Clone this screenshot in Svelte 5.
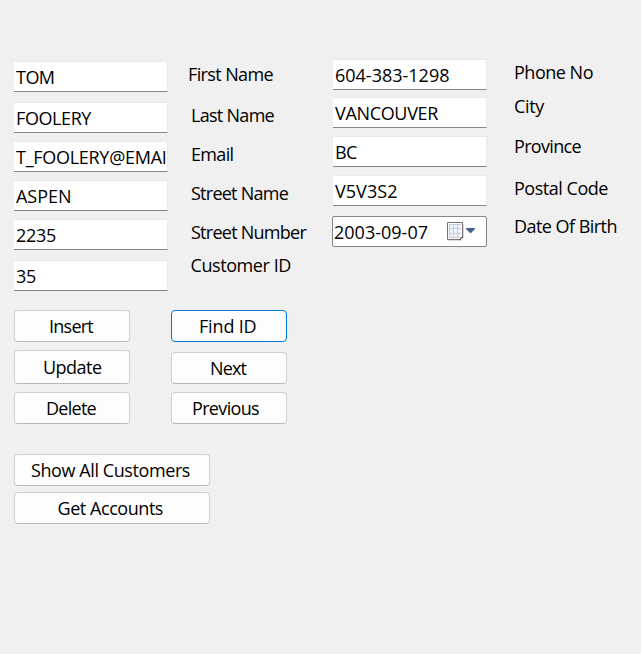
<script>
  // t: text, gap: space above, x: left inset, w: advance width of the text
  const names = [
    { t: 'TOM', gap: 0, x: 1, w: 38.5 },
    { t: 'FOOLERY', gap: 10, x: 1, w: 75 },
    { t: 'T_FOOLERY@EMAI', gap: 8, x: 1, w: 150.5 },
    { t: 'ASPEN', gap: 8, x: 1, w: 55.5 },
    { t: '2235', gap: 8, x: 1, w: 40 },
    { t: '35', gap: 10, x: 1, w: 20 }
  ];
  const nameLabels = [
    { t: 'First Name', gap: 0, x: 1, w: 85 },
    { t: 'Last Name', gap: 17, x: 4, w: 83 },
    { t: 'Email', gap: 15, x: 4, w: 42.5 },
    { t: 'Street Name', gap: 15, x: 4, w: 97 },
    { t: 'Street Number', gap: 15, x: 4, w: 115 },
    { t: 'Customer ID', gap: 9, x: 3.5, w: 100.5 }
  ];
  const details = [
    { t: '604-383-1298', gap: 0, x: 1, w: 114.5 },
    { t: 'VANCOUVER', gap: 7, x: 1, w: 103 },
    { t: 'BC', gap: 8, x: 1, w: 21.5 },
    { t: 'V5V3S2', gap: 8, x: 1, w: 62.5 }
  ];
  const detailLabels = [
    { t: 'Phone No', gap: 0, x: 2, w: 79 },
    { t: 'City', gap: 10, x: 2, w: 30 },
    { t: 'Province', gap: 16, x: 2, w: 67 },
    { t: 'Postal Code', gap: 18, x: 2, w: 94 },
    { t: 'Date Of Birth', gap: 14, x: 2, w: 103 }
  ];
  const edits = [
    { t: 'Insert', gap: 0, h: 32, x: 34, w: 44 },
    { t: 'Update', gap: 8, h: 34, x: 28, w: 58.5 },
    { t: 'Delete', gap: 8, h: 32, x: 31, w: 50 }
  ];
  const moves = [
    { t: 'Find ID', gap: 0, h: 32, x: 27, w: 57.5, focus: true },
    { t: 'Next', gap: 10, h: 32, x: 38, w: 36 },
    { t: 'Previous', gap: 8, h: 32, x: 20, w: 67 }
  ];
  const reports = [
    { t: 'Show All Customers', gap: 0, h: 32, x: 16, w: 159 },
    { t: 'Get Accounts', gap: 6, h: 32, x: 42.5, w: 105.5 }
  ];

  // Tracks the text so that its advance equals the given width.
  function track(node, width) {
    const natural = node.getBoundingClientRect().width;
    node.style.letterSpacing = (width - natural) / node.textContent.length + 'px';
  }
</script>

{#snippet text(i)}<span class="text" style:margin-left="{i.x}px" use:track={i.w}>{i.t}</span>{/snippet}

{#snippet fields(list)}
  {#each list as i}
    <div class="field" style:margin-top="{i.gap}px">{@render text(i)}</div>
  {/each}
{/snippet}

{#snippet labels(list)}
  {#each list as i}
    <div class="label" style:margin-top="{i.gap}px">{@render text(i)}</div>
  {/each}
{/snippet}

{#snippet buttons(list)}
  {#each list as i}
    <button class:focus={i.focus} class:tall={i.h > 32} style:margin-top="{i.gap}px">{@render text(i)}</button>
  {/each}
{/snippet}

<main>
  <section class="form">
    <div class="col inputs">{@render fields(names)}</div>
    <div class="col captions">{@render labels(nameLabels)}</div>
    <div class="col inputs second">
      {@render fields(details)}
      <div class="date">
        {@render text({ t: '2003-09-07', x: 1, w: 94 })}
        <svg width="32" height="24" viewBox="0 0 32 24">
          <path d="M3 20.5h13.5l2-2V4" fill="none" stroke="#dcdada" />
          <path d="M2.5 2.5h15v15l-2 2h-13z" fill="#fafbfd" stroke="#7d6f6e" />
          <path d="M4 4h12v13l-1 1H4z" fill="#c6cedc" />
          <path d="M5 5h3v3H5zm4 0h3v3H9zm4 0h3v3h-3zM5 9h3v4H5zm4 0h3v4H9zm4 0h3v4h-3zM5 14h3v3H5zm4 0h3v3H9zm4 0h3v3h-3z" fill="#eff2f8" />
          <path d="M17.5 16.5v1l-2 2h-1z" fill="#5d5052" stroke="#5d5052" stroke-width=".6" />
          <path d="M21 8h9v1l-4 4h-1l-4-4z" fill="#48608f" />
        </svg>
      </div>
    </div>
    <div class="col captions third">{@render labels(detailLabels)}</div>
  </section>
  <section class="actions">
    <div class="col">{@render buttons(edits)}</div>
    <div class="col">{@render buttons(moves)}</div>
  </section>
  <section class="col reports">{@render buttons(reports)}</section>
</main>

<style>
  :global(body) { margin: 0; background: #f0f0f0; }
  main {
    box-sizing: border-box;
    width: 641px;
    height: 654px;
    padding: 60px 0 0 13px;
    border-top: 1px solid #ebf1fa;
    background: #f0f0f0;
    overflow: hidden;
    color: #000;
    font: 18px/24px "Open Sans", "Noto Sans", sans-serif;
  }
  .form { display: flex; align-items: flex-start; height: 249px; }
  .col { display: flex; flex-direction: column; }
  .text { display: inline-block; white-space: pre; flex: none; }
  .inputs { width: 155px; }
  .captions { width: 144px; margin-left: 19px; padding-top: 1px; }
  .second { margin-top: -2px; margin-left: 1px; }
  .third { width: 120px; margin-left: 25px; padding-top: 0; margin-top: -1px; }
  .field, .date { box-sizing: border-box; display: flex; height: 31px; overflow: hidden; background: #fff; }
  .field {
    margin-left: 1px;
    padding: 3px 1px 0;
    border: 1px solid #e9e9e9;
    border-left: 0;
    border-bottom-color: #858585;
  }
  .date {
    justify-content: space-between;
    margin-top: 10px;
    padding: 3px 9px 0 0;
    border: 1px solid #868686;
    border-radius: 2px;
  }
  .date svg { flex: none; }
  .actions { display: flex; gap: 41px; margin-left: 1px; }
  .actions .col { width: 116px; }
  .reports { width: 196px; margin: 30px 0 0 1px; }
  button {
    box-sizing: border-box;
    display: flex;
    height: 32px;
    padding: 3px 0 0;
    border: 1px solid #d0d0d0;
    border-bottom-color: #bababa;
    border-radius: 4px;
    background: #fdfdfd;
    color: inherit;
    font: inherit;
  }
  .tall { height: 34px; padding-top: 4px; }
  .focus { border-color: #0078d4; }
</style>
